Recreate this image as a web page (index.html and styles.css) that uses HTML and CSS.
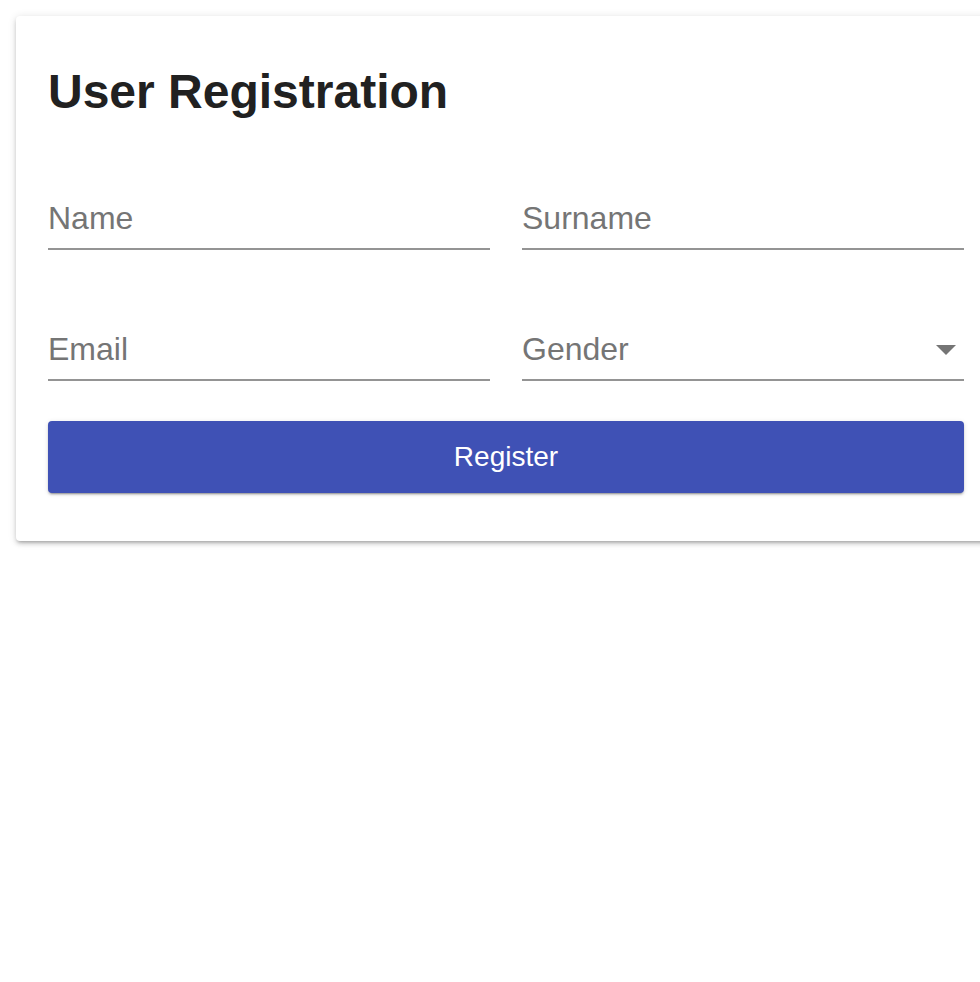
FILE: index.html
```html
<!DOCTYPE html>
<html lang="en">
<head>
<meta charset="utf-8">
<title>User Registration</title>
<link rel="stylesheet" href="styles.css">
</head>
<body>
<div class="page">
  <form class="card">
    <h1 class="title">User Registration</h1>
    <div class="fields">
      <div class="field"><span class="label">Name</span></div>
      <div class="field"><span class="label">Surname</span></div>
      <div class="field"><span class="label">Email</span></div>
      <div class="field select">
        <span class="label">Gender</span>
        <svg class="arrow" width="20" height="10" viewBox="0 0 20 10"><path d="M0 0 L10 10 L20 0 Z" fill="#757575"/></svg>
      </div>
    </div>
    <button type="button" class="btn">Register</button>
  </form>
</div>
</body>
</html>
```
FILE: styles.css
```css
html, body {
  margin: 0;
  padding: 0;
  background: #fff;
  overflow: hidden;
}
body {
  font-family: "Liberation Sans", Arial, sans-serif;
}
.page {
  padding: 16px;
}
.card {
  box-sizing: border-box;
  width: 980px;
  padding: 32px 32px 48px;
  background: #fff;
  border-radius: 4px;
  box-shadow: 0 3px 3px -2px rgba(0,0,0,0.2), 0 3px 4px 0 rgba(0,0,0,0.14), 0 1px 8px 0 rgba(0,0,0,0.12);
  display: flex;
  flex-direction: column;
}
.title {
  margin: 16px 0 0;
  font-size: 48px;
  line-height: 56px;
  font-weight: 700;
  color: #212121;
}
.fields {
  margin-top: 80px;
  display: grid;
  grid-template-columns: 1fr 1fr;
  column-gap: 32px;
  row-gap: 81px;
}
.field {
  display: flex;
  align-items: flex-start;
  justify-content: space-between;
  height: 40px;
  padding-bottom: 8px;
  border-bottom: 2px solid #949494;
}
.label {
  font-size: 32px;
  line-height: 36px;
  color: #757575;
}
.arrow {
  display: block;
  align-self: center;
  margin-right: 8px;
  margin-top: -3px;
}
.btn {
  margin-top: 40px;
  height: 72px;
  border: 0;
  border-radius: 4px;
  background: #3f51b5;
  color: #fff;
  font-family: "Liberation Sans", Arial, sans-serif;
  font-size: 28px;
  padding: 0;
  box-shadow: 0 3px 1px -2px rgba(0,0,0,0.2), 0 2px 2px 0 rgba(0,0,0,0.14), 0 1px 5px 0 rgba(0,0,0,0.12);
  cursor: pointer;
}
```
